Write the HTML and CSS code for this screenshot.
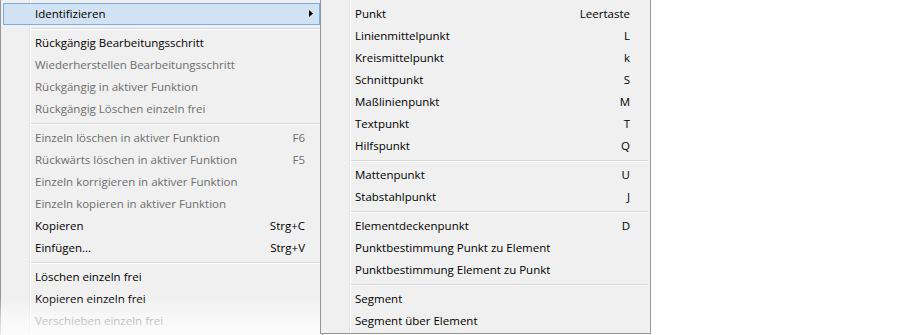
FILE: index.html
```html
<!DOCTYPE html>
<html lang="de">
<head>
<meta charset="utf-8">
<link rel="stylesheet" href="styles.css">
</head>
<body>
<div class="stage">
  <div class="menu main">
    <div class="item hot"><span>Identifizieren</span><svg class="arrow" width="4" height="7" viewBox="0 0 4 7"><path d="M0 0L4 3.5L0 7Z" fill="#000"/></svg></div>
    <div class="sep"></div>
    <div class="item"><span>Rückgängig Bearbeitungsschritt</span></div>
    <div class="item off"><span>Wiederherstellen Bearbeitungsschritt</span></div>
    <div class="item off"><span>Rückgängig in aktiver Funktion</span></div>
    <div class="item off"><span>Rückgängig Löschen einzeln frei</span></div>
    <div class="sep"></div>
    <div class="item off"><span>Einzeln löschen in aktiver Funktion</span><span class="key">F6</span></div>
    <div class="item off"><span>Rückwärts löschen in aktiver Funktion</span><span class="key">F5</span></div>
    <div class="item off"><span>Einzeln korrigieren in aktiver Funktion</span></div>
    <div class="item off"><span>Einzeln kopieren in aktiver Funktion</span></div>
    <div class="item"><span>Kopieren</span><span class="key">Strg+C</span></div>
    <div class="item"><span>Einfügen...</span><span class="key">Strg+V</span></div>
    <div class="sep"></div>
    <div class="item"><span>Löschen einzeln frei</span></div>
    <div class="item"><span>Kopieren einzeln frei</span></div>
    <div class="item off"><span>Verschieben einzeln frei</span></div>
  </div>
  <div class="menu sub">
    <div class="item"><span>Punkt</span><span class="key">Leertaste</span></div>
    <div class="item"><span>Linienmittelpunkt</span><span class="key">L</span></div>
    <div class="item"><span>Kreismittelpunkt</span><span class="key">k</span></div>
    <div class="item"><span>Schnittpunkt</span><span class="key">S</span></div>
    <div class="item"><span>Maßlinienpunkt</span><span class="key">M</span></div>
    <div class="item"><span>Textpunkt</span><span class="key">T</span></div>
    <div class="item"><span>Hilfspunkt</span><span class="key">Q</span></div>
    <div class="sep"></div>
    <div class="item"><span>Mattenpunkt</span><span class="key">U</span></div>
    <div class="item"><span>Stabstahlpunkt</span><span class="key">J</span></div>
    <div class="sep"></div>
    <div class="item"><span>Elementdeckenpunkt</span><span class="key">D</span></div>
    <div class="item"><span>Punktbestimmung Punkt zu Element</span></div>
    <div class="item"><span>Punktbestimmung Element zu Punkt</span></div>
    <div class="sep"></div>
    <div class="item"><span>Segment</span></div>
    <div class="item"><span>Segment über Element</span></div>
  </div>
</div>
</body>
</html>
```
FILE: styles.css
```css
html, body {
  margin: 0;
  padding: 0;
  background: #ffffff;
}
.stage {
  position: relative;
  width: 900px;
  height: 335px;
  overflow: hidden;
  font-family: "Open Sans", "Noto Sans", sans-serif;
  font-size: 11.5px;
  color: #000;
}
.menu {
  box-sizing: border-box;
  background-color: #f0f0f0;
  border: 1px solid #979797;
  padding: 2px;
  background-image: linear-gradient(to right, transparent 29px, #e2e3e3 29px, #e2e3e3 30px, #ffffff 30px, #ffffff 31px, transparent 31px);
  background-origin: border-box;
}
.main {
  position: relative;
  width: 323px;
  height: 360px;
  border-top: none;
  padding-top: 3px;
}
.main::after {
  content: "";
  position: absolute;
  left: -1px;
  right: 0;
  top: 298px;
  height: 37px;
  background: linear-gradient(to bottom, rgba(255,255,255,0) 0%, rgba(255,255,255,0.5) 50%, rgba(255,255,255,0.8) 100%);
}
.sub {
  position: absolute;
  left: 320px;
  top: 0;
  width: 331px;
  height: 334px;
  border-top: none;
  padding-top: 3px;
}
.item {
  display: flex;
  align-items: center;
  justify-content: space-between;
  height: 22px;
  padding: 0 15px 2px 32px;
  box-sizing: border-box;
  white-space: nowrap;
}
.sub .item {
  padding-right: 18px;
}
.item.off {
  color: #6d6d6d;
}
.item.hot {
  background: #d1e2f2;
  border: 1px solid #78aee5;
  padding-left: 31px;
  padding-right: 6px;
}
.arrow {
  display: block;
}
.sep {
  height: 7px;
  margin-left: 28px;
  background: linear-gradient(to bottom, transparent 3px, #d7d7d7 3px, #d7d7d7 4px, #ffffff 4px, #ffffff 5px, transparent 5px);
}
```
